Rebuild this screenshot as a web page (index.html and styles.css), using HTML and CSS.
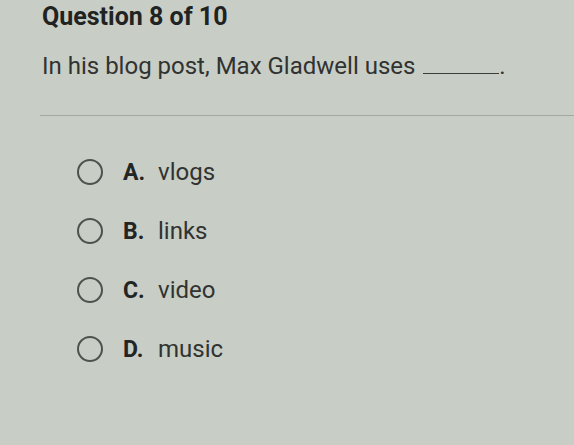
FILE: index.html
```html
<!DOCTYPE html>
<html>
<head>
<meta charset="utf-8">
<link rel="stylesheet" href="styles.css">
</head>
<body>
<div class="page">
  <h1 class="title">Question 8 of 10</h1>
  <p class="prompt">In his blog post, Max Gladwell uses <span class="blank"></span>.</p>
  <hr class="divider">
  <ul class="options">
    <li class="option"><span class="radio"></span><span class="letter">A.</span><span class="text">vlogs</span></li>
    <li class="option"><span class="radio"></span><span class="letter">B.</span><span class="text">links</span></li>
    <li class="option"><span class="radio"></span><span class="letter">C.</span><span class="text">video</span></li>
    <li class="option"><span class="radio"></span><span class="letter">D.</span><span class="text">music</span></li>
  </ul>
</div>
</body>
</html>
```
FILE: styles.css
```css
html, body {
  margin: 0;
  padding: 0;
  background: #c8cdc5;
}
body {
  font-family: Roboto, "Liberation Sans", sans-serif;
  color: #2e312f;
  width: 574px;
  height: 445px;
  overflow: hidden;
}
.page {
  padding: 2px 0 0 42px;
}
.title {
  margin: 0;
  font-size: 25px;
  font-weight: 700;
  line-height: 30px;
  color: #202321;
}
.prompt {
  margin: 19px 0 0 0;
  font-size: 24px;
  line-height: 30px;
  color: #303331;
}
.blank {
  display: inline-block;
  width: 76px;
  border-bottom: 1.5px solid #3a3d3a;
  margin-left: 2px;
  vertical-align: baseline;
}
.divider {
  margin: 34px 0 0 -2px;
  border: 0;
  border-top: 1px solid #a3a8a0;
  height: 0;
}
.options {
  list-style: none;
  margin: 41px 0 0 0;
  padding: 0 0 0 35px;
  display: flex;
  flex-direction: column;
  gap: 29px;
}
.option {
  display: flex;
  align-items: center;
  height: 30px;
}
.radio {
  width: 26px;
  height: 26px;
  border: 2px solid #4e514e;
  border-radius: 50%;
  box-sizing: border-box;
  margin-right: 20px;
  flex: none;
}
.letter {
  font-weight: 700;
  font-size: 23px;
  color: #222523;
  width: 35px;
}
.text {
  font-size: 24px;
  color: #303331;
}
```
